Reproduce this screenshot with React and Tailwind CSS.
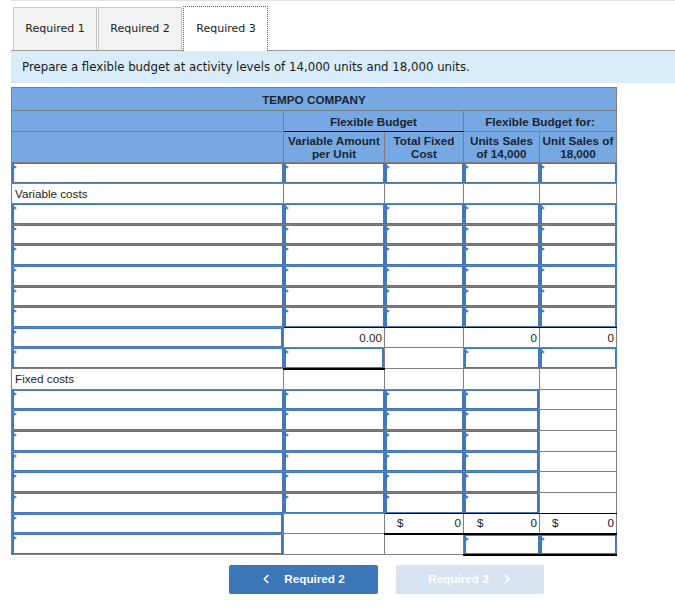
import { ChevronLeft, ChevronRight } from "lucide-react";

const R21 = "h-[21px]";
const R20 = "h-[20px]";

const blackBelow = { input: true, line: true };

// i = input cell, e = empty cell, anything else is described by an object
const rows = [
  { h: R21, cells: ["i", "i", "i", "i", "i"] },
  { h: R20, cells: [{ label: "Variable costs" }, "e", "e", "e", "e"] },
  { h: R21, cells: ["i", "i", "i", "i", "i"] },
  { h: R20, cells: ["i", "i", "i", "i", "i"] },
  { h: R21, cells: ["i", "i", "i", "i", "i"] },
  { h: R21, cells: ["i", "i", "i", "i", "i"] },
  { h: R20, cells: ["i", "i", "i", "i", "i"] },
  { h: R21, cells: ["i", blackBelow, blackBelow, blackBelow, blackBelow] },
  { h: R20, cells: ["i", { value: "0.00" }, { blank: true }, { value: "0" }, { value: "0" }] },
  { h: R21, cells: ["i", { input: true, thick: true }, "e", "i", "i"] },
  { h: R21, cells: [{ label: "Fixed costs" }, "e", "e", "e", "e"] },
  { h: R20, cells: ["i", "i", "i", "i", "e"] },
  { h: R21, cells: ["i", "i", "i", "i", "e"] },
  { h: R21, cells: ["i", "i", "i", "i", "e"] },
  { h: R20, cells: ["i", "i", "i", "i", "e"] },
  { h: R21, cells: ["i", "i", "i", "i", "e"] },
  { h: R21, cells: ["i", "i", blackBelow, blackBelow, { blank: true, line: true }] },
  {
    h: R20,
    cells: [
      "i",
      "e",
      { value: "0", dollar: "pl-[12px]", thick: true },
      { value: "0", dollar: "pl-[13px]", thick: true },
      { value: "0", dollar: "pl-[12px]", thick: true },
    ],
  },
  { h: R21, cells: ["i", "e", "e", { input: true, thick: true }, { input: true, thick: true }] },
];

const isInput = (cell) => cell === "i" || (cell && cell.input);

function InputBox({ cover }) {
  return (
    <div
      className={`relative h-full border-x-2 border-y border-[#4377b5] bg-white ${
        cover ? "-mr-[1px]" : ""
      }`}
    >
      <span className="absolute -left-[2px] top-0 h-0 w-0 border-y-[3px] border-l-[5px] border-y-transparent border-l-[#3f7cc0]" />
    </div>
  );
}

function Cell({ cell, h, cover }) {
  const base = `${h} border border-[#7f7f7f] p-0 align-middle`;

  if (cell === "i") {
    return (
      <td className={base}>
        <InputBox cover={cover} />
      </td>
    );
  }
  if (cell === "e") return <td className={base} />;

  const extra = [cell.line && "border-b-black", cell.thick && "border-b-2 border-b-black"]
    .filter(Boolean)
    .join(" ");

  if (cell.input) {
    return (
      <td className={`${base} ${extra}`}>
        <InputBox cover={cover} />
      </td>
    );
  }
  if (cell.blank) return <td className={`${base} ${extra}`} />;
  if (cell.label) {
    return (
      <td className={base}>
        <span className="pl-[3px]">{cell.label}</span>
      </td>
    );
  }
  return (
    <td className={`${base} ${extra}`}>
      <div className="flex items-center justify-between pr-[2px]">
        <span className={cell.dollar || ""}>{cell.dollar ? "$" : ""}</span>
        <span>{cell.value}</span>
      </div>
    </td>
  );
}

function Tab({ label, active }) {
  if (active) {
    return (
      <div className="-mb-[1px] flex h-[45px] w-[85px] items-center justify-center border border-dotted border-[#2f6fb5] border-b-0 bg-white pl-[1px] pt-[1px]">
        {label}
      </div>
    );
  }
  return (
    <div className="flex h-[43px] w-[84px] items-center justify-center border border-[#c4c4c4] border-b-0 bg-[#f2f2f2] pt-[1px]">
      {label}
    </div>
  );
}

export default function App() {
  return (
    <div className="h-[611px] w-[675px] overflow-hidden bg-white pl-[11px] font-['Liberation_Sans',Arial,sans-serif] text-[11.7px] text-[#222]">
      <div className="h-[1px] bg-[#e3e3e3]" />

      <div className="flex items-end gap-[1px] pl-[2px] pt-[5px] font-['DejaVu_Sans',Verdana,sans-serif] text-[11px] text-[#1a1a1a]">
        <Tab label="Required 1" />
        <Tab label="Required 2" />
        <Tab label="Required 3" active />
      </div>
      <div className="h-[1px] bg-[#9a9a9a]" />

      <div className="flex h-[32px] items-center bg-[#d9ecfa] pl-[11px] pt-[2px] font-['DejaVu_Sans',Verdana,sans-serif] text-[11.75px] text-[#1a1a1a]">
        Prepare a flexible budget at activity levels of 14,000 units and 18,000 units.
      </div>

      <table className="mt-[4px] w-[605px] table-fixed border-collapse">
        <colgroup>
          <col className="w-[272px]" />
          <col className="w-[101px]" />
          <col className="w-[79px]" />
          <col className="w-[76px]" />
          <col className="w-[77px]" />
        </colgroup>
        <thead className="bg-[#76a9e4] text-center leading-[13px] text-[#1c2430]">
          <tr className="h-[23px]">
            <th colSpan={5} className="border border-[#7f7f7f] p-0 font-bold">
              TEMPO COMPANY
            </th>
          </tr>
          <tr className="h-[21px]">
            <th className="border border-[#7f7f7f] p-0" />
            <th colSpan={2} className="border border-[#7f7f7f] border-b-black p-0 font-bold">
              Flexible Budget
            </th>
            <th colSpan={2} className="border border-[#7f7f7f] p-0 font-bold">
              Flexible Budget for:
            </th>
          </tr>
          <tr className="h-[31px]">
            <th className="border border-[#7f7f7f] p-0" />
            <th className="border border-[#7f7f7f] p-0 font-bold">
              Variable Amount
              <br />
              per Unit
            </th>
            <th className="border border-[#7f7f7f] p-0 font-bold">
              Total Fixed
              <br />
              Cost
            </th>
            <th className="border border-[#7f7f7f] p-0 font-bold">
              Units Sales
              <br />
              of 14,000
            </th>
            <th className="border border-[#7f7f7f] p-0 font-bold">
              Unit Sales of
              <br />
              18,000
            </th>
          </tr>
        </thead>
        <tbody>
          {rows.map((row, i) => (
            <tr key={i} className={row.h}>
              {row.cells.map((cell, j) => (
                <Cell
                  key={j}
                  cell={cell}
                  h={row.h}
                  cover={j === 4 || isInput(row.cells[j + 1])}
                />
              ))}
            </tr>
          ))}
        </tbody>
      </table>

      <div className="mt-[9px] flex gap-[18px] pl-[218px] font-bold">
        <button className="flex h-[29px] w-[149px] items-center justify-center gap-[11px] rounded-[2px] bg-[#3b76b9] pr-[3px] text-white">
          <ChevronLeft size={14} strokeWidth={3} />
          Required 2
        </button>
        <button className="flex h-[29px] w-[148px] items-center justify-center gap-[11px] rounded-[2px] bg-[#d8e3f0] pl-[2px] text-white">
          Required 3
          <ChevronRight size={14} strokeWidth={3} />
        </button>
      </div>
    </div>
  );
}
